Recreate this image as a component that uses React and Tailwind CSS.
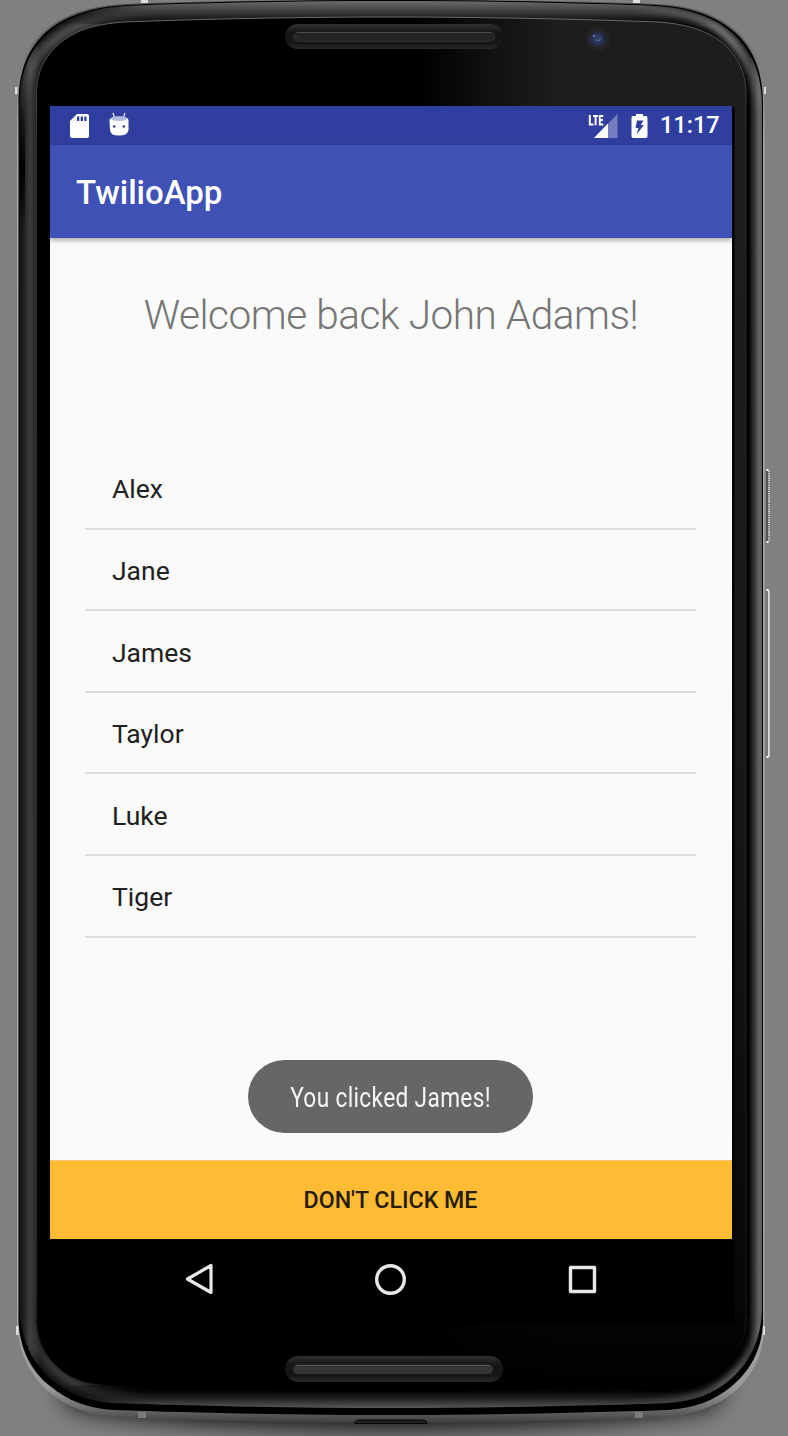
const contacts = ["Alex", "Jane", "James", "Taylor", "Luke", "Tiger"];

const OUTER =
  "M390 0 C300 0 200 2 125 5 C82 8 58 20 42 36 C25 54 18.5 76 18.5 104 V1322 C20 1350 32 1372 50 1386 C68 1401 88 1408 112 1410 C200 1413 300 1415 390 1415 C480 1415 580 1413 668 1410 C694 1408 714 1401 732 1386 C750 1371 762 1350 763 1322 V104 C763 76 756 54 739 36 C722 20 700 8 657 5 C580 2 480 0 390 0 Z";
const RIM =
  "M390 0 C300 0 200 1 125 4 C82 6 56 19 40 35 C23 53 17 76 17 104 V1325 C19 1355 31 1377 50 1393 C68 1407 88 1415 112 1417 C200 1421 300 1423 390 1423 C480 1423 580 1421 668 1417 C694 1415 714 1407 733 1393 C752 1377 764 1355 764.5 1325 V104 C764.5 76 758 53 741 35 C724 19 700 6 657 4 C580 1 480 0 390 0 Z";
const BODY =
  "M390 1 C300 1 200 3 125 6 C84 9 60 21 44 37 C27 55 19.5 76 19.5 104 V1310 C21 1340 33 1364 51 1379 C69 1394 88 1401 112 1403 C200 1406 300 1408 390 1408 C480 1408 580 1406 668 1403 C694 1401 714 1394 731 1379 C749 1363 761 1340 762 1310 V104 C761 76 754 55 737 37 C720 21 698 9 655 6 C580 3 480 1 390 1 Z";
const FACE =
  "M390 17 C300 17 200 19 125 22 C92 24 72 32 58 45 C42 60 36.500 74 36.500 96 V1318 C37 1340 45 1355 58 1367 C72 1380 90 1384 112 1385 C200 1389 300 1391 390 1391 C480 1391 580 1389 668 1385 C692 1384 710 1379 723 1367 C738 1354 746 1340 746 1318 V96 C746 74 740 60 725 45 C710 32 690 24 657 22 C580 19 480 17 390 17 Z";

function PhoneBody() {
  return (
    <svg className="absolute inset-0" width="788" height="1436" viewBox="0 0 788 1436" aria-hidden="true">
      <defs>
        <linearGradient id="sides" gradientUnits="userSpaceOnUse" x1="18" y1="0" x2="764" y2="0">
          <stop offset="0" stopColor="#111" />
          <stop offset="0.006" stopColor="#1c1c1c" />
          <stop offset="0.016" stopColor="#3c3c3c" />
          <stop offset="0.024" stopColor="#282828" />
          <stop offset="0.03" stopColor="#151515" />
          <stop offset="0.97" stopColor="#000" />
          <stop offset="0.98" stopColor="#080808" />
          <stop offset="0.988" stopColor="#3c3c3a" />
          <stop offset="0.993" stopColor="#626260" />
          <stop offset="1" stopColor="#5a5a58" />
        </linearGradient>
        <linearGradient id="top" gradientUnits="userSpaceOnUse" x1="0" y1="0" x2="0" y2="20">
          <stop offset="0" stopColor="#707070" />
          <stop offset="0.4" stopColor="#4c4c4c" />
          <stop offset="1" stopColor="#151515" />
        </linearGradient>
        <linearGradient id="bottom" gradientUnits="userSpaceOnUse" x1="0" y1="1390" x2="0" y2="1409">
          <stop offset="0" stopColor="#000" />
          <stop offset="0.4" stopColor="#1c1c1c" />
          <stop offset="1" stopColor="#5e5e5e" />
        </linearGradient>
        <linearGradient id="midX" gradientUnits="userSpaceOnUse" x1="60" y1="0" x2="720" y2="0">
          <stop offset="0" stopColor="#fff" stopOpacity="0" />
          <stop offset="0.14" stopColor="#fff" />
          <stop offset="0.86" stopColor="#fff" />
          <stop offset="1" stopColor="#fff" stopOpacity="0" />
        </linearGradient>
        <mask id="midMask"><rect width="788" height="1436" fill="url(#midX)" /></mask>
        <linearGradient id="glass" gradientUnits="userSpaceOnUse" x1="420" y1="0" x2="560" y2="0">
          <stop offset="0" stopColor="#000" />
          <stop offset="0.5" stopColor="#101110" />
          <stop offset="1" stopColor="#1c1d1c" />
        </linearGradient>
        <linearGradient id="glassFade" gradientUnits="userSpaceOnUse" x1="0" y1="200" x2="0" y2="1390">
          <stop offset="0" stopColor="#000" stopOpacity="0" />
          <stop offset="0.5" stopColor="#000" stopOpacity="0.2" />
          <stop offset="0.93" stopColor="#000" stopOpacity="0.8" />
          <stop offset="1" stopColor="#000" />
        </linearGradient>
        <linearGradient id="rim" gradientUnits="userSpaceOnUse" x1="0" y1="0" x2="0" y2="1423">
          <stop offset="0" stopColor="#505050" />
          <stop offset="0.1" stopColor="#aaa" />
          <stop offset="0.9" stopColor="#a8a8a8" />
          <stop offset="0.975" stopColor="#999" />
          <stop offset="0.99" stopColor="#6c6c6c" />
          <stop offset="1" stopColor="#3c3c3c" />
        </linearGradient>
        <linearGradient id="faceEdge" gradientUnits="userSpaceOnUse" x1="0" y1="0" x2="0" y2="1391">
          <stop offset="0" stopColor="#7c7c7c" />
          <stop offset="0.03" stopColor="#505050" />
          <stop offset="0.1" stopColor="#303030" />
          <stop offset="0.93" stopColor="#282828" />
          <stop offset="0.98" stopColor="#000" />
        </linearGradient>
        <linearGradient id="slot" x1="0" y1="0" x2="0" y2="1">
          <stop offset="0" stopColor="#303030" />
          <stop offset="0.35" stopColor="#151515" />
          <stop offset="0.75" stopColor="#161616" />
          <stop offset="1" stopColor="#292929" />
        </linearGradient>
        <linearGradient id="leftShade" x1="0" y1="0" x2="0" y2="1">
          <stop offset="0" stopColor="#000" stopOpacity="0" />
          <stop offset="0.5" stopColor="#000" />
          <stop offset="1" stopColor="#000" stopOpacity="0" />
        </linearGradient>
        <linearGradient id="cornerTop" gradientUnits="userSpaceOnUse" x1="0" y1="40" x2="0" y2="115">
          <stop offset="0" stopColor="#8a8a8a" />
          <stop offset="1" stopColor="#8a8a8a" stopOpacity="0" />
        </linearGradient>
        <linearGradient id="cornerBottom" gradientUnits="userSpaceOnUse" x1="0" y1="1310" x2="0" y2="1370">
          <stop offset="0" stopColor="#707070" stopOpacity="0" />
          <stop offset="1" stopColor="#707070" />
        </linearGradient>
        <radialGradient id="lens">
          <stop offset="0" stopColor="#34426e" />
          <stop offset="0.6" stopColor="#283156" />
          <stop offset="1" stopColor="#22252f" />
        </radialGradient>
        <filter id="shadowBlur" x="-20%" y="-100%" width="140%" height="300%"><feGaussianBlur stdDeviation="12" /></filter>
        <filter id="softBlur" x="-20%" y="-20%" width="140%" height="140%"><feGaussianBlur stdDeviation="3" /></filter>
        <clipPath id="bodyClip"><path d={BODY} /></clipPath>
      </defs>
      <rect width="788" height="1436" fill="#808080" />
      <path d="M50 1340 H734 L715 1406 Q640 1424 390 1428 Q140 1424 70 1406 Z" fill="#000" opacity="0.95" filter="url(#shadowBlur)" />
      <rect x="141" y="0" width="7" height="3" fill="#ddd" />
      <rect x="633" y="0" width="7" height="3" fill="#ddd" />
      <path d={RIM} fill="url(#rim)" />
      <path d={OUTER} fill="#000" />
      <path d={BODY} fill="url(#sides)" />
      <g clipPath="url(#bodyClip)">
        <path d="M22 120 C24 70 38 50 63 34 C86 18 120 14 190 11" fill="none" stroke="url(#cornerTop)" strokeWidth="10" opacity="0.5" filter="url(#softBlur)" />
        <path d="M762 120 C756 70 742 46 718 28 C692 11 660 10 590 8" fill="none" stroke="url(#cornerTop)" strokeWidth="9" opacity="0.9" filter="url(#softBlur)" />
        <path d="M28 1300 C30 1340 42 1360 60 1374 C80 1390 100 1394 150 1397" fill="none" stroke="url(#cornerBottom)" strokeWidth="8" opacity="0.45" filter="url(#softBlur)" />
        <path d="M763 1300 C760 1345 744 1370 720 1386 C700 1400 670 1403 590 1405" fill="none" stroke="url(#cornerBottom)" strokeWidth="8" opacity="0.85" filter="url(#softBlur)" />
        <g mask="url(#midMask)">
          <rect width="788" height="24" fill="url(#top)" />
          <rect y="1385" width="788" height="26" fill="url(#bottom)" />
        </g>
        <rect x="18" y="105" width="7" height="130" fill="url(#leftShade)" />
      </g>
      <path d={FACE} fill="url(#glass)" />
      <path d={FACE} fill="url(#glassFade)" />
      <path d={FACE} fill="none" stroke="url(#faceEdge)" strokeWidth="1" />
      <rect x="746.500" y="104" width="3" height="1214" fill="#000" />
      <rect x="732" y="107" width="2.500" height="1217" fill="#000" />
      <rect x="50" y="1239" width="684" height="85" fill="#000" />
      <rect x="285" y="24" width="218" height="25" rx="12.500" fill="url(#slot)" />
      <rect x="293.500" y="32.500" width="201" height="9" rx="4.500" fill="#232323" stroke="#303030" />
      <path d="M297 32.500 H491" stroke="#4a4a4a" />
      <rect x="285" y="1356" width="218" height="26" rx="13" fill="url(#slot)" />
      <rect x="293" y="1364.500" width="200" height="9.500" rx="4.750" fill="#343434" />
      <path d="M296 1365.500 H490" stroke="#555" />
      <circle cx="598" cy="39" r="12" fill="#242424" />
      <circle cx="597.500" cy="39" r="8.500" fill="url(#lens)" />
      <circle cx="594" cy="36" r="1" fill="#7088b8" />
      <path d="M596 40 Q600 42 600.500 38" fill="none" stroke="#5a6a98" />
      <rect x="15" y="87" width="2.500" height="7" fill="#ddd" />
      <rect x="764" y="87" width="2" height="7" fill="#ddd" />
      <rect x="16" y="1326" width="2.500" height="9" fill="#ddd" />
      <rect x="763" y="1326" width="2" height="9" fill="#ddd" />
      <rect x="138" y="1412" width="8" height="6" fill="#7a7a7a" />
      <rect x="635" y="1412" width="8" height="6" fill="#7a7a7a" />
      <path d="M355 1423.500 V1422 Q356 1420 359 1420 H423 Q427 1420 427 1423.500 Z" fill="#222" stroke="#050505" />
      <rect x="766" y="470" width="2.500" height="73" fill="#555" />
      <path d="M769 471 V542" stroke="#c8c8c8" strokeWidth="2" strokeDasharray="1.300 0.900" />
      <path d="M766.500 470 h2 M766.500 542 h2 M766.500 590 h2 M766.500 757 h2" stroke="#fff" strokeWidth="2" />
      <rect x="766" y="591" width="2" height="165" fill="#777" />
      <rect x="768" y="590" width="1.700" height="167" fill="#ddd" />
    </svg>
  );
}

function StatusBar() {
  return (
    <div className="flex h-[39px] items-center justify-between bg-[#303f9f] pl-5 pr-[14px] text-white">
      <div className="flex items-center gap-5">
        <svg width="19" height="24" viewBox="0 0 19 24">
          <path d="M7 0H17Q19 0 19 2V22Q19 24 17 24H2Q0 24 0 22V7Z" fill="#fff" />
          <path d="M7 2.500H9.300V7H7ZM10.700 2.500H13V7H10.700ZM14.300 2.500H16.500V7H14.300Z" fill="#303f9f" />
        </svg>
        <svg className="mb-1" width="20" height="24" viewBox="0 0 20 24">
          <path d="M4 1 6 7M16 1 14 7" stroke="#fff" strokeWidth="1.300" opacity=".85" />
          <path d="M.500 8Q1 4.500 10 4.500T19.500 8V18Q19 23.500 10 23.500T1 18Z" fill="#fff" />
          <path d="M1.500 6.500Q3 4.500 10 4.500T18.500 6.500Q17 9 10 9T1.500 6.500Z" fill="#b5bbdf" />
          <circle cx="5.200" cy="14.500" r="1.300" fill="#303f9f" />
          <circle cx="14.800" cy="14.500" r="1.300" fill="#303f9f" />
        </svg>
      </div>
      <div className="flex items-center">
        <svg width="30" height="24" viewBox="0 0 30 24">
          <path d="M29.500 0V24H6Z" fill="#747dbf" />
          <path d="M20 9.500V24H6Z" fill="#fff" />
          <path d="M1.800 1V10.500H5.500M5 2H10M7.600 2V11.200M15.300 2H11.800V10.500H15.300M11.800 6H15" fill="none" stroke="#fff" strokeWidth="1.900" />
        </svg>
        <svg className="ml-[13px]" width="17" height="24" viewBox="0 0 17 24">
          <path d="M5 0H12V2H15Q16.500 2 16.500 4V22Q16.500 24 15 24H2Q.500 24 .500 22V4Q.500 2 2 2H5Z" fill="#fff" />
          <path d="M6 6.500H12.500L9.800 11H13L5.500 20.500 7.500 14.300 4.500 13.800Z" fill="#303f9f" />
        </svg>
        <span className="ml-3 w-[58px] whitespace-nowrap text-right text-[23.500px] font-medium leading-none">11:17</span>
      </div>
    </div>
  );
}

function NavigationBar() {
  return (
    <div className="flex h-20 items-center justify-between bg-black px-[134px]">
      <svg width="30" height="34" viewBox="0 0 30 34" fill="none" stroke="#e8e8e8" strokeWidth="3.200" strokeLinejoin="round">
        <path d="M27 3.500V30.500L3.500 17Z" />
      </svg>
      <svg width="32" height="32" viewBox="0 0 32 32" fill="none" stroke="#e8e8e8" strokeWidth="3.400">
        <circle cx="15.500" cy="16.500" r="13.800" />
      </svg>
      <svg width="30" height="30" viewBox="0 0 30 30" fill="none" stroke="#e8e8e8" strokeWidth="3.400" strokeLinejoin="round">
        <rect x="2.500" y="3.500" width="24" height="24" />
      </svg>
    </div>
  );
}

export default function App() {
  return (
    <div className="relative h-[1436px] w-[788px] overflow-hidden bg-[#808080] font-['Roboto',sans-serif]">
      <PhoneBody />
      <div className="relative flex h-full flex-col pl-[50px] pr-14 pt-[106px]">
        <StatusBar />
        <header className="z-10 flex h-[93px] shrink-0 items-center bg-[#3f51b5] pl-[26px] pt-px shadow-[0_2px_5px_rgba(0,0,0,0.35)]">
          <h1 className="text-[33px] font-medium leading-none text-white">TwilioApp</h1>
        </header>
        <main className="flex h-[922px] shrink-0 flex-col bg-[#fafafa]">
          <p className="mt-[53px] h-12 whitespace-nowrap text-center text-[40.500px] font-light leading-[48px] tracking-[-0.45px] text-[#757575]">
            Welcome back John Adams!
          </p>
          <ul className="ml-[35px] mr-9 mt-[109px]">
            {contacts.map((name) => (
              <li key={name} className="flex h-[81.600px] items-center border-b-2 border-[#dedede] pl-[27px] pt-[3px] text-[26.500px] text-[#212121]">
                {name}
              </li>
            ))}
          </ul>
          <div className="mb-[27px] ml-[198px] mt-auto flex h-[73px] w-[285px] items-center justify-center rounded-full bg-[#666666] pt-1">
            <span className="scale-x-[0.84] whitespace-nowrap text-[27px] leading-none tracking-[0.4px] text-[#f5f5f5]">You clicked James!</span>
          </div>
        </main>
        <button className="h-[79px] shrink-0 border-t border-[#f0c878] bg-[#ffbb33] pr-px pt-0.5 text-[23.200px] font-medium leading-none text-[#261c08]">
          DON'T CLICK ME
        </button>
        <NavigationBar />
      </div>
    </div>
  );
}
